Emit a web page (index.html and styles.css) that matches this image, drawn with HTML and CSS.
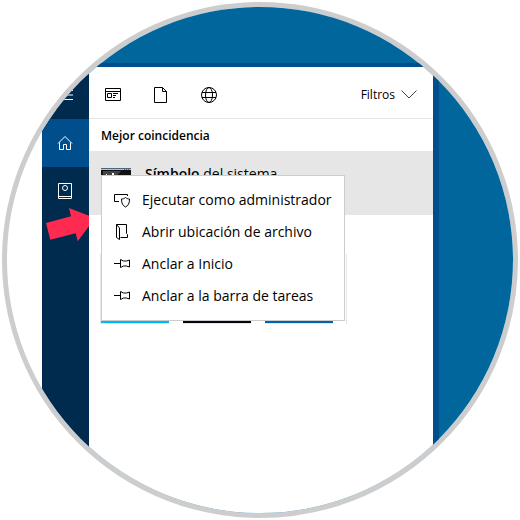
FILE: index.html
```
<!DOCTYPE html>
<html lang="es">
<head>
    <meta charset="UTF-8">
    <meta name="viewport" content="width=device-width, initial-scale=1.0">
    <title>Símbolo del sistema</title>
    <link rel="stylesheet" href="styles.css">
</head>
<body>
    <div class="lens">
        <div class="desktop">
            <nav class="sidebar">
                <button type="button" class="side-button menu-button" aria-label="Menú">
                    <svg width="16" height="10" viewBox="0 0 16 10"><path d="M0 .5h16M0 5h16M0 9.500h16"/></svg>
                </button>
                <button type="button" class="side-button active" aria-label="Inicio">
                    <svg width="16" height="16" viewBox="0 0 16 16"><path d="M1 8.500 8 1.500l7 7M2.500 7.500v7h4v-5h3v5h4v-7"/></svg>
                </button>
                <button type="button" class="side-button" aria-label="Cuaderno">
                    <svg width="16" height="18" viewBox="0 0 16 18"><path d="M1.500 1.500h13v15h-13zM1.500 14.500h13"/><circle cx="8" cy="6" r="2.500"/></svg>
                </button>
                <svg class="arrow" width="43" height="34" viewBox="0 0 43 34"><path d="M0 15 25 8.300 23 0l20 7.700v10.600L31.700 33.300l-2-8L4.300 31.700z"/></svg>
            </nav>
            <main class="panel">
                <div class="toolbar">
                    <button type="button" class="tool" aria-label="Aplicaciones">
                        <svg width="16" height="14" viewBox="0 0 16 14"><path d="M.5.5h15v12H.5zM.5 3.500h15M2.500 5.500h4v4h-4zM8 5.500h5M8 7.500h3M8 9.500h2"/></svg>
                    </button>
                    <button type="button" class="tool" aria-label="Documentos">
                        <svg width="14" height="16" viewBox="0 0 14 16"><path d="M.5.5h8l4 4v11H.5zM8.500.5v4h4"/></svg>
                    </button>
                    <button type="button" class="tool" aria-label="Web">
                        <svg width="16" height="16" viewBox="0 0 16 16"><circle cx="8" cy="8" r="7.500"/><ellipse cx="8" cy="8" rx="3.500" ry="7.500"/><path d="M1 5.500h14M1 10.500h14"/></svg>
                    </button>
                    <button type="button" class="filters">
                        Filtros
                        <svg width="16" height="9" viewBox="0 0 16 9"><path d="m.5.5 7.500 7.500L15.500.5"/></svg>
                    </button>
                </div>
                <h2>Mejor coincidencia</h2>
                <div class="result">
                    <svg class="thumb" width="30" height="30" viewBox="0 0 30 30">
                        <rect width="30" height="30" fill="#111"/>
                        <path fill="#b4c0cc" d="M0 0h30v2H0z"/>
                        <path fill="#4d6680" d="M0 0h30v1H0zM23 1h1v1h-1zM25 1h1v1h-1zM27 1h1v1h-1z"/>
                        <path fill="#444" d="M2 3h18L12 12H2z"/>
                        <path fill="#fff" d="M5 6h1v2H5zM11 5h2v2h-2z"/>
                    </svg>
                    <span><b>Símbolo</b> del sistema</span>
                </div>
                <div class="tiles">
                    <div class="tile cyan"></div>
                    <div class="tile black"></div>
                    <div class="tile blue"></div>
                </div>
                <div class="context-menu">
                    <button type="button" class="menu-item">
                        <svg width="16" height="16" viewBox="0 0 16 16"><path d="M5 9.500H.5v-7h13V4M11.500 5.500c-1 1-2.500 1.500-4 1.500 0 4 1 6.500 4 8 3-1.500 4-4 4-8-1.500 0-3-.5-4-1.500z"/></svg>
                        Ejecutar como administrador
                    </button>
                    <button type="button" class="menu-item">
                        <svg width="16" height="16" viewBox="0 0 16 16"><path d="M2.500.5h10v9l1 1v3h-7M2.500.5v13l3 2V4z"/></svg>
                        Abrir ubicación de archivo
                    </button>
                    <button type="button" class="menu-item">
                        <svg width="16" height="16" viewBox="0 0 16 16"><path d="M0 7.500h6.500M6.500 3.500v8l3-1.500h3l3 1V4l-3 1h-3z"/></svg>
                        Anclar a Inicio
                    </button>
                    <button type="button" class="menu-item">
                        <svg width="16" height="16" viewBox="0 0 16 16"><path d="M0 7.500h6.500M6.500 3.500v8l3-1.500h3l3 1V4l-3 1h-3z"/></svg>
                        Anclar a la barra de tareas
                    </button>
                </div>
            </main>
        </div>
    </div>
</body>
</html>
```

FILE: styles.css
```
* {
    box-sizing: border-box;
}

body {
    margin: 2px;
    background-color: #fff;
    color: #000;
    font-family: "Open Sans", "Noto Sans", sans-serif;
    font-size: 14px;
}

button {
    padding: 0;
    border: none;
    background: none;
    color: inherit;
    font: inherit;
    cursor: pointer;
}

svg {
    flex: none;
    fill: none;
    stroke: currentColor;
}

/* round frame that crops the desktop */
.lens {
    max-width: 516px;
    aspect-ratio: 1;
    margin: 0 auto;
    padding-left: 35px;
    border: 5px solid #cdcdcd;
    border-radius: 50%;
    overflow: hidden;
}

.desktop {
    display: flex;
    height: 100%;
    padding: 56px 74px 0 0;
    background-color: #00669c;
}

.sidebar {
    display: flex;
    flex-direction: column;
    width: 47px;
    padding-top: 4px;
    background-color: #002a4e;
    color: #fff;
}

.side-button {
    display: flex;
    align-items: center;
    justify-content: center;
    height: 48px;
    padding-right: 1px;
}

.menu-button {
    height: 52px;
    padding-top: 4px;
}

.side-button.active {
    background-color: #004e8c;
}

.arrow {
    align-self: flex-end;
    margin-top: -7px;
    fill: #ff2a50;
    stroke: none;
}

.panel {
    position: relative;
    flex: 1;
    border-top: 4px solid #004e8e;
    border-right: 6px solid #004e8e;
    background-color: #fff;
    background-clip: padding-box;
}

.toolbar {
    display: flex;
    height: 52px;
    padding-right: 16px;
    border-bottom: 1px solid #e3e3e3;
}

.tool {
    display: flex;
    align-items: center;
    justify-content: center;
    width: 48px;
    padding-top: 5px;
}

.filters {
    display: flex;
    align-items: center;
    gap: 6px;
    margin-left: auto;
    padding-top: 4px;
    font-size: 12px;
}

.filters svg {
    stroke: #444;
}

h2 {
    margin: 0;
    padding: 1px 0 0 12px;
    font-size: 12px;
    font-weight: 600;
    line-height: 31px;
}

.result {
    display: flex;
    align-items: flex-start;
    gap: 14px;
    height: 64px;
    padding: 13px 12px;
    background-color: #e6e6e6;
}

.result b {
    font-weight: 600;
}

.thumb {
    margin-top: 4px;
    stroke: none;
}

.tiles {
    display: flex;
    gap: 14px;
    width: 247px;
    height: 70px;
    margin: 39px 0 0 11px;
    border: solid #e6e6e6;
    border-width: 0 1px;
}

.tile {
    width: 68px;
    border-bottom: 1px solid #e6e6e6;
}

.cyan {
    background-color: #00b9f2;
}

.black {
    background-color: #05050f;
}

.blue {
    background-color: #0063b1;
}

.context-menu {
    position: absolute;
    top: 108px;
    left: 12px;
    width: 244px;
    padding: 8px 0;
    border: 1px solid #ccc;
    background-color: #fff;
}

.menu-item {
    display: flex;
    align-items: center;
    gap: 12px;
    width: 100%;
    height: 32px;
    padding: 0 0 2px 12px;
    white-space: nowrap;
}

.menu-item svg {
    margin-top: 2px;
}
```
